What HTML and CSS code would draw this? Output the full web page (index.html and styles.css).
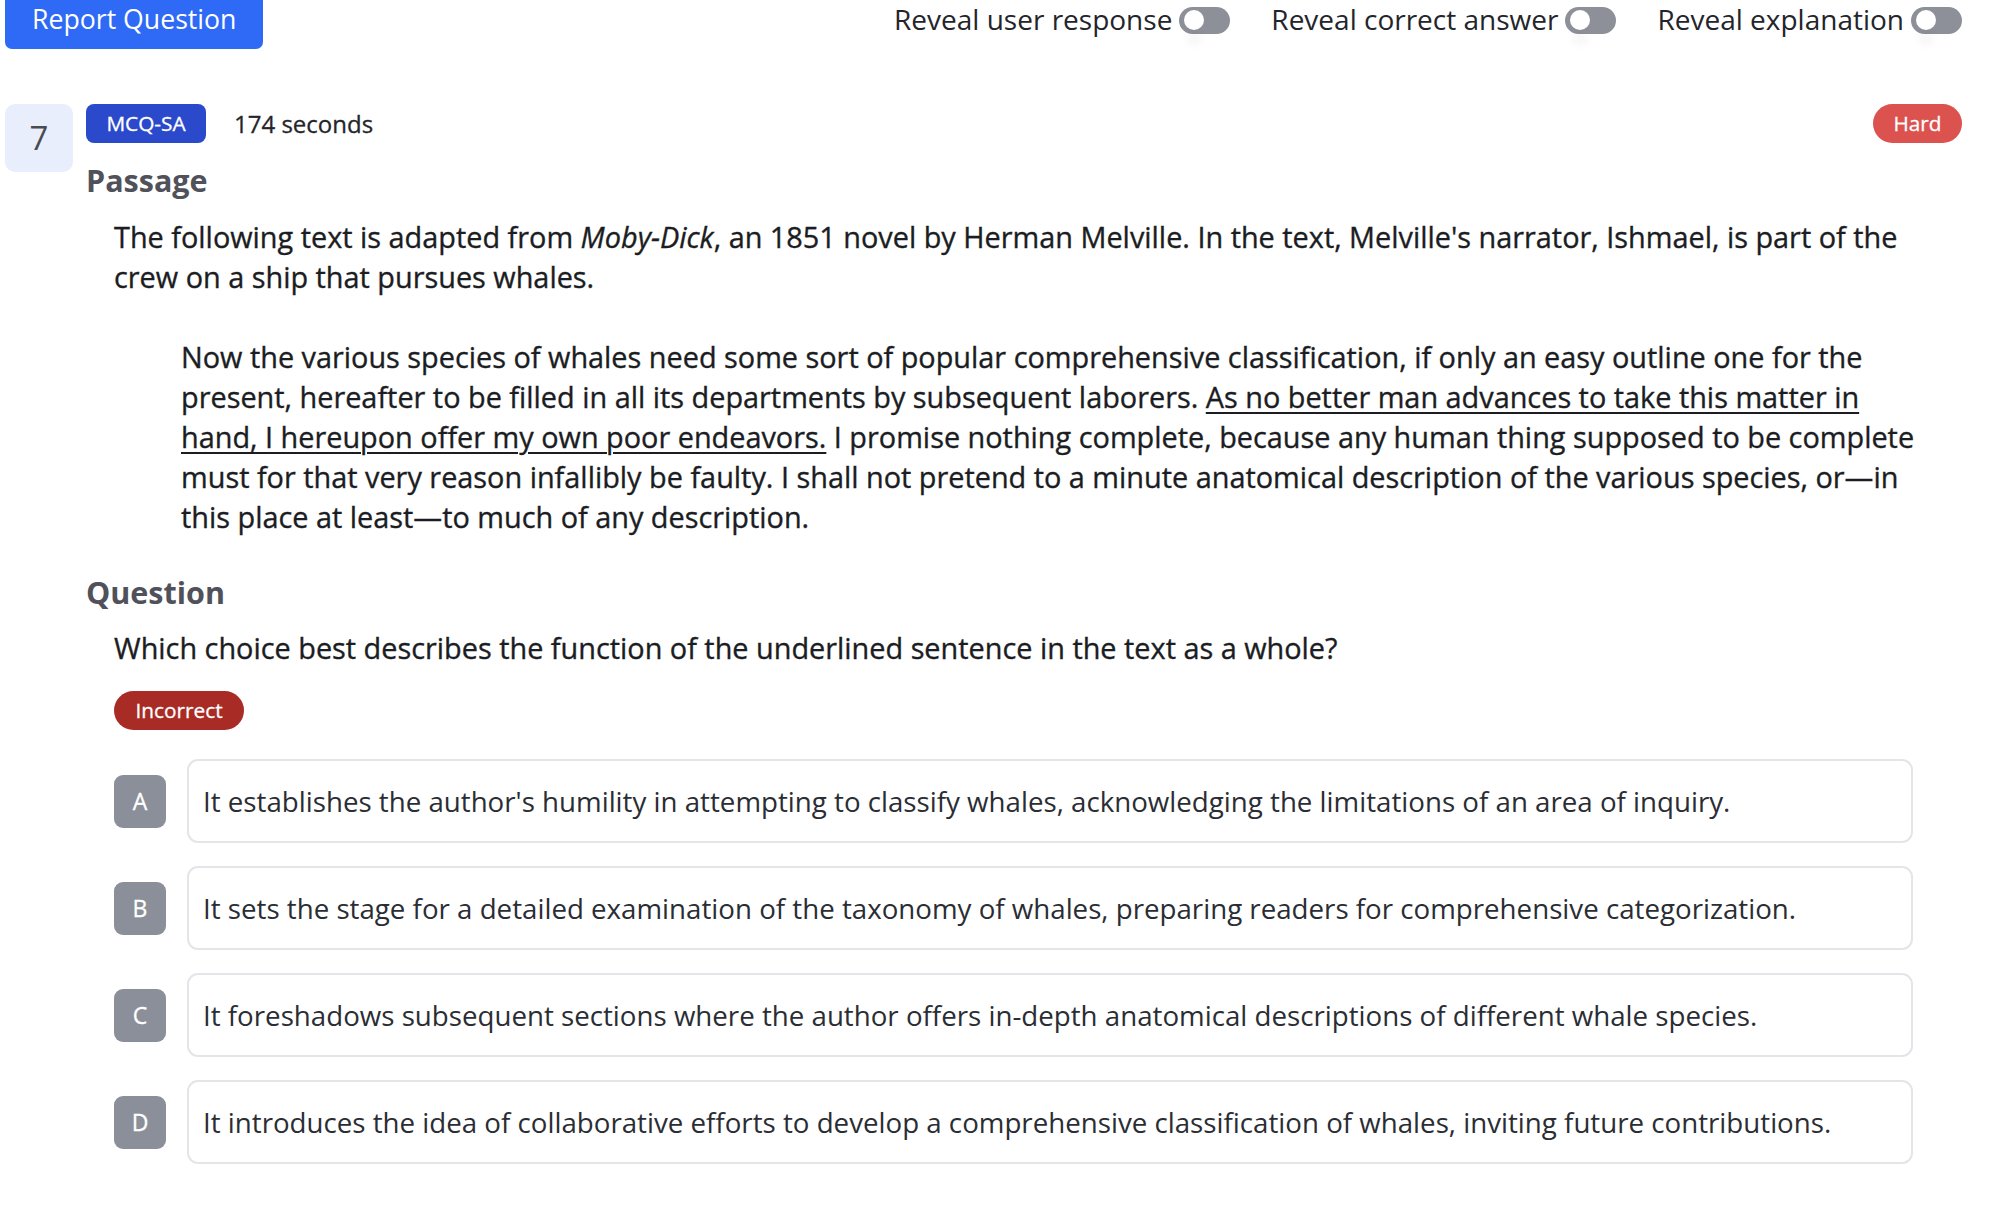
FILE: index.html
```html
<!DOCTYPE html>
<html lang="en">
<head>
<meta charset="utf-8">
<title>Question 7</title>
<link rel="stylesheet" href="styles.css">
</head>
<body>
<div class="page">
  <header class="topbar">
    <button class="report">Report Question</button>
    <div class="toggles">
      <label class="toggle"><span>Reveal user response</span><span class="switch"><span class="knob"></span></span></label>
      <label class="toggle"><span>Reveal correct answer</span><span class="switch"><span class="knob"></span></span></label>
      <label class="toggle"><span>Reveal explanation</span><span class="switch"><span class="knob"></span></span></label>
    </div>
  </header>

  <main class="question">
    <div class="num">7</div>
    <div class="content">
      <div class="meta">
        <span class="badge type">MCQ-SA</span>
        <span class="time">174 seconds</span>
        <span class="badge pill hard">Hard</span>
      </div>

      <h2 class="section-title">Passage</h2>
      <div class="section-body passage">
        <p>The following text is adapted from <em>Moby-Dick</em>, an 1851 novel by Herman Melville. In the text, Melville's narrator, Ishmael, is part of the crew on a ship that pursues whales.</p>
        <blockquote>Now the various species of whales need some sort of popular comprehensive classification, if only an easy outline one for the present, hereafter to be filled in all its departments by subsequent laborers. <u>As no better man advances to take this matter in hand, I hereupon offer my own poor endeavors.</u> I promise nothing complete, because any human thing supposed to be complete must for that very reason infallibly be faulty. I shall not pretend to a minute anatomical description of the various species, or—in this place at least—to much of any description.</blockquote>
      </div>

      <h2 class="section-title q-title">Question</h2>
      <div class="section-body">
        <p class="prompt">Which choice best describes the function of the underlined sentence in the text as a whole?</p>
        <div class="status-row"><span class="badge pill incorrect">Incorrect</span></div>
        <ol class="options">
          <li class="option"><span class="letter">A</span><div class="card">It establishes the author's humility in attempting to classify whales, acknowledging the limitations of an area of inquiry.</div></li>
          <li class="option"><span class="letter">B</span><div class="card">It sets the stage for a detailed examination of the taxonomy of whales, preparing readers for comprehensive categorization.</div></li>
          <li class="option"><span class="letter">C</span><div class="card">It foreshadows subsequent sections where the author offers in-depth anatomical descriptions of different whale species.</div></li>
          <li class="option"><span class="letter">D</span><div class="card">It introduces the idea of collaborative efforts to develop a comprehensive classification of whales, inviting future contributions.</div></li>
        </ol>
      </div>
    </div>
  </main>
</div>
</body>
</html>
```

FILE: styles.css
```css
* { box-sizing: border-box; }

html, body {
  margin: 0;
  padding: 0;
  background: #ffffff;
}

body {
  font-family: "Open Sans", "Noto Sans", sans-serif;
  font-size: 28px;
  line-height: 40px;
  color: #1f2229;
}

.page {
  padding: 0 42px 0 5px;
}

/* ---------- top bar ---------- */
.topbar {
  display: flex;
  justify-content: space-between;
  align-items: flex-start;
}

.report {
  margin-top: -11px;
  height: 60px;
  padding: 10px 27px;
  border: none;
  border-radius: 7px;
  background: #2e6af6;
  color: #ffffff;
  font-family: inherit;
  font-size: 26.67px;
  line-height: 40px;
}

.toggles {
  display: flex;
  gap: 41px;
  margin-top: -1px;
}

.toggle {
  display: flex;
  align-items: center;
  gap: 7px;
  color: #23252b;
}

.switch {
  display: flex;
  align-items: center;
  width: 51px;
  height: 27px;
  margin-top: 2px;
  padding: 0 5px;
  border-radius: 14px;
  background: #8e9099;
}

.knob {
  width: 20px;
  height: 20px;
  border-radius: 50%;
  background: #ffffff;
  box-shadow: 0 18px 8px -2px rgba(0, 0, 0, 0.035);
}

/* ---------- question ---------- */
.question {
  display: flex;
  gap: 13px;
  margin-top: 55px;
}

.num {
  flex: none;
  width: 68px;
  height: 68px;
  border-radius: 10px;
  background: #e8eefb;
  color: #4a4b50;
  font-size: 33px;
  display: flex;
  align-items: center;
  justify-content: center;
}

.content {
  flex: 1;
  min-width: 0;
}

.meta {
  display: flex;
  align-items: center;
  height: 39px;
}

.badge {
  display: inline-flex;
  align-items: center;
  justify-content: center;
  height: 39px;
  font-size: 20.8px;
  line-height: 27px;
  color: #ffffff;
  -webkit-text-stroke: 0.3px currentColor;
}

.type {
  width: 120px;
  border-radius: 8px;
  background: #2b4acb;
}

.time {
  margin-left: 28px;
  font-size: 24px;
  color: #23252b;
  -webkit-text-stroke: 0.3px currentColor;
}

.pill {
  border-radius: 20px;
}

.hard {
  margin-left: auto;
  width: 89px;
  background: #dc524f;
}

.section-title {
  margin: 14px 0 0;
  font-size: 30.5px;
  line-height: 46.7px;
  font-weight: 700;
  color: #50515a;
}

.q-title {
  margin-top: 32px;
}

.section-body {
  padding: 0 49px 0 28px;
}

.section-body.passage {
  padding-right: 38px;
}

.section-body p,
.passage blockquote {
  font-size: 28.85px;
  color: #1b1d23;
  -webkit-text-stroke: 0.35px currentColor;
}

.section-body p {
  margin: 13px 0 0;
}

.passage blockquote {
  margin: 40px 0 0 67px;
}

.passage u {
  text-decoration-thickness: 2px;
  text-underline-offset: 4px;
}

.prompt {
  margin-top: 14px;
}

.status-row {
  margin-top: 19px;
}

.incorrect {
  width: 130px;
  background: #a92b26;
}

.options {
  list-style: none;
  margin: 29px 0 0;
  padding: 0;
  display: flex;
  flex-direction: column;
  gap: 23px;
}

.option {
  display: flex;
  align-items: center;
  gap: 21px;
}

.letter {
  flex: none;
  width: 52px;
  height: 53px;
  border-radius: 9px;
  background: #8a8f99;
  color: #ffffff;
  font-size: 23px;
  -webkit-text-stroke: 0.3px currentColor;
  display: flex;
  align-items: center;
  justify-content: center;
}

.card {
  flex: 1;
  border: 2px solid #e3e5e9;
  border-radius: 11px;
  padding: 20px 14px;
  font-size: 27.7px;
  color: #2a2d34;
}
```
